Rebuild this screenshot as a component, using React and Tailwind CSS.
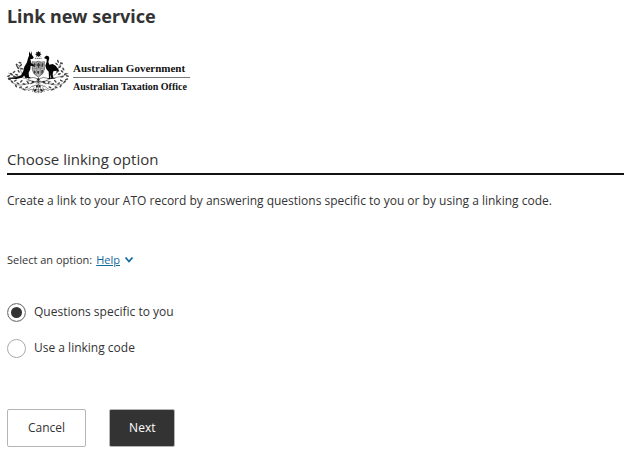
import { useState } from 'react';

const options = [
  { value: 'questions', label: 'Questions specific to you' },
  { value: 'code', label: 'Use a linking code' },
];

const leaves = [
  [34, 222, 30], [42, 216, -40], [50, 224, 20], [56, 214, 60], [36, 245, 40],
  [46, 242, -30], [54, 250, 30], [64, 244, -50], [72, 252, 20], [62, 262, -20],
  [48, 258, 60], [80, 262, -30], [72, 268, 30], [84, 248, 60], [44, 230, 10],
  [54, 203, 50], [62, 196, -40], [66, 206, 10], [50, 196, 70], [60, 188, 20],
  [26, 228, -20], [28, 238, 20], [202, 228, 20], [200, 238, -20],
  [196, 222, -30], [186, 214, 40], [178, 222, -20], [172, 214, -60], [194, 245, -40],
  [184, 242, 30], [176, 250, -30], [166, 244, 50], [158, 252, -20], [168, 262, 20],
  [182, 258, -60], [150, 262, 30], [158, 268, -30], [146, 248, -60], [186, 230, -10],
  [180, 200, -50], [170, 192, 40], [184, 190, 20], [174, 184, 70], [190, 207, 60],
];

function Crest() {
  return (
    <svg viewBox="21 150 186 132" className="h-11 w-[62px] shrink-0" role="img" aria-label="Commonwealth Coat of Arms">
      <g fill="none" stroke="#444" strokeWidth="1.7" strokeLinecap="round">
        <path d="M92 242C70 228 48 236 26 220M95 250C74 250 56 264 34 246M96 258C82 274 68 272 60 262M72 226C56 216 66 198 50 192" />
        <path d="M138 242C160 228 182 236 204 220M135 250C156 250 174 264 196 246M134 258C148 274 162 272 170 262M162 226C180 218 168 198 186 188" />
      </g>
      <g fill="#444">
        {leaves.map(([x, y, angle]) => (
          <ellipse key={`${x}-${y}`} cx={x} cy={y} rx="5" ry="2.4" transform={`rotate(${angle} ${x} ${y})`} />
        ))}
      </g>
      <path d="m115 152 2 5 5-2-2 5 5 3-5 2 2 5-5-2-2 4-2-4-5 2 2-5-5-2 5-3-2-5 5 2z" fill="#111" />
      <path d="M105 175h20" stroke="#333" strokeWidth="2.4" strokeDasharray="4 1.5" />
      <path d="M97 185q9 3 18-1 9 4 18 1v23q0 14-18 23-18-9-18-23z" fill="#bbb" stroke="#444" strokeWidth="2" />
      <path d="M97 206h36M109 186v38M121 186v38" stroke="#555" strokeWidth="1.3" />
      <g fill="#333">
        <path d="m100 192 4-3 3 4-2 9h-4zM113 188h5v5h3v4h-3v6h-5v-6h-3v-4h3zM125 190h5v5l-3 7h-3zM101 211l5 2 1 6-4 2zM112 212l6 2-2 9-4-3zM124 211l5-1-1 9-4 3z" />
      </g>
      <path
        d="m87 153 4 10 3-9 2 11 5 7-2 4-8 2 3 12 8 5-1 4-9-2-1 11-5 10 1 12 7 4H76l-3-7-8 6-16 4-24-1-1-3 23-1 16-6 7-13 3-13 8-13 3-12 3-8z"
        fill="#050505"
      />
      <path
        d="m132 174 6-7 7 1 3 6-3 12 3 8 10-2 9 5 7 9 4 9-8-3-10 2-2 9 2 10 8 3h-14l-2-13-1 10 5 4h-14l5-4-1-18-7-8-3-10 4-12v-7z"
        fill="#050505"
      />
      <g fill="none" stroke="#444" strokeWidth="2">
        <path d="M84 236q16-8 31 1 16-9 31-1M78 244q14-5 25 1h24q14-6 27 1M91 252q24-14 48 0M96 260q19-10 38 0M102 262l-4 14M128 262l5 14M115 232v48M109 242l12 9M121 242l-12 9" />
        <path d="m84 272 10-4 12 3 9-2 9 2 12-3 10 4M104 278q11-7 22 0" />
      </g>
      <g fill="#222">
        <path d="m115 234 5 5-5 5-5-5zM98 242l6 3-5 5-6-3zM132 242l-6 3 5 5 6-3zM108 257l5-3 1 8-6 1zM122 257l-5-3-1 8 6 1zM102 269l8-4-2 9-6 2zM128 269l-8-4 2 9 6 2z" />
      </g>
    </svg>
  );
}

function GovernmentLogo() {
  return (
    <div className="flex items-start gap-1">
      <Crest />
      <div className="min-w-[117px] pt-[11px] font-['Liberation_Serif','Times_New_Roman',serif] text-[11px] font-bold leading-[14px] text-[#111]">
        <p className="border-b border-[#777] pb-0.5">Australian Government</p>
        <p className="pt-0.5 text-[10px]">Australian Taxation Office</p>
      </div>
    </div>
  );
}

export default function App() {
  const [selected, setSelected] = useState('questions');

  return (
    <main className="pl-[7px] pr-1.5 pt-1 font-['Open_Sans','Segoe_UI',sans-serif] text-[12px] text-[#333]">
      <h1 className="font-['Noto_Sans','Segoe_UI',sans-serif] text-[18px] font-bold leading-6">Link new service</h1>
      <div className="mt-[22px]">
        <GovernmentLogo />
      </div>

      <h2 className="mt-[54px] border-b-2 border-[#111] pb-[3px] text-[15px] leading-[22px]">Choose linking option</h2>
      <p className="mt-4 leading-5">
        Create a link to your ATO record by answering questions specific to you or by using a linking code.
      </p>

      <form onSubmit={(e) => e.preventDefault()}>
        <fieldset aria-labelledby="option-label">
          <div className="mt-[39px] flex items-center text-[11px] leading-5">
            <span id="option-label">Select an option:</span>
            <a href="#help" className="ml-1 flex items-center gap-1 text-[#13689c]">
              <span className="underline">Help</span>
              <svg viewBox="0 0 10 8" className="h-2 w-2.5" fill="none" stroke="currentColor" strokeWidth="1.8" aria-hidden="true">
                <path d="m1.5 1.5 3.5 4 3.5-4" />
              </svg>
            </a>
          </div>
          <div className="mt-8 flex flex-col items-start gap-4">
            {options.map((option) => (
              <label key={option.value} className="flex items-center gap-2 leading-5">
                <input
                  type="radio"
                  name="linking-option"
                  value={option.value}
                  checked={selected === option.value}
                  onChange={() => setSelected(option.value)}
                  className="size-[19px] shrink-0 appearance-none rounded-full border border-[#aaa] bg-white checked:border-[#777] checked:bg-[#333] checked:bg-clip-padding checked:shadow-[inset_0_0_0_3px_#fff]"
                />
                {option.label}
              </label>
            ))}
          </div>
        </fieldset>

        <div className="mt-[51px] flex gap-[23px]">
          <button type="button" className="h-[38px] rounded-xs border border-[#b5b5b5] bg-white px-5">
            Cancel
          </button>
          <button type="submit" className="h-[38px] rounded-xs border border-[#b5b5b5] bg-[#333] px-[19px] text-white">
            Next
          </button>
        </div>
      </form>
    </main>
  );
}
